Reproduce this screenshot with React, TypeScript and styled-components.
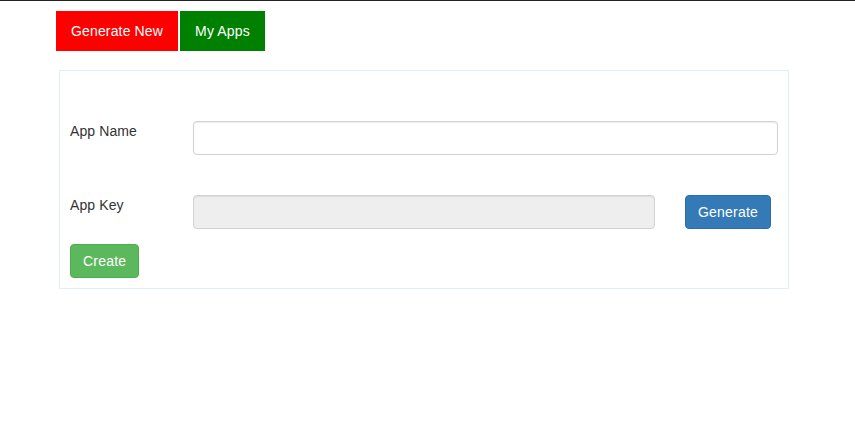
import styled, { createGlobalStyle } from "styled-components";

const GlobalStyle = createGlobalStyle`
  html, body {
    margin: 0;
    padding: 0;
    background: #fff;
  }
  body {
    font-family: "Liberation Sans", Arial, sans-serif;
    font-size: 14px;
    line-height: 20px;
    color: #333;
    border-top: 1px solid #222;
  }
  * {
    box-sizing: border-box;
  }
`;

const Page = styled.div`
  padding: 10px 0 0 56px;
`;

// top nav
const Nav = styled.nav`
  display: flex;
  gap: 2px;
`;

const NavButton = styled.button<{ tone: string }>`
  font: inherit;
  letter-spacing: 0.15px;
  color: #fff;
  background: ${(props) => props.tone};
  border: none;
  border-radius: 0;
  padding: 10px 15px;
  line-height: 20px;
  cursor: pointer;
`;

// form panel
const Panel = styled.div`
  width: 730px;
  height: 219px;
  margin: 19px 0 0 3px;
  border: 1px solid #e1eefa;
  padding: 50px 10px 0 10px;
`;

const Row = styled.div<{ gap?: number }>`
  display: grid;
  grid-template-columns: 123px 1fr;
  align-items: start;
  margin-bottom: ${(props) => props.gap ?? 0}px;
`;

const Label = styled.label`
  letter-spacing: 0.1px;
`;

const Field = styled.div`
  display: flex;
  align-items: center;
`;

const Input = styled.input`
  display: block;
  width: 100%;
  height: 34px;
  padding: 6px 12px;
  font: inherit;
  color: #555;
  background: ${(props) => (props.disabled ? "#eee" : "#fff")};
  border: 1px solid #d2d2d2;
  border-radius: 4px;
  box-shadow: inset 0 1px 1px rgba(0, 0, 0, 0.075);
  outline: none;
`;

const KeyInput = styled(Input)`
  width: 462px;
  flex: none;
`;

const Button = styled.button<{ variant: "primary" | "success" }>`
  font: inherit;
  letter-spacing: 0.2px;
  line-height: 20px;
  padding: 6px 12px;
  border-radius: 4px;
  color: #fff;
  cursor: pointer;
  background: ${(props) => (props.variant === "primary" ? "#337ab7" : "#5cb85c")};
  border: 1px solid
    ${(props) => (props.variant === "primary" ? "#2e6da4" : "#4cae4c")};
`;

const GenerateButton = styled(Button)`
  margin-left: 30px;
`;

const App = () => {
  return (
    <Page>
      <GlobalStyle />
      <Nav>
        <NavButton tone="#ff0000">Generate New</NavButton>
        <NavButton tone="#008000">My Apps</NavButton>
      </Nav>
      <Panel>
        <Row gap={40}>
          <Label>App Name</Label>
          <Input type="text" />
        </Row>
        <Row gap={15}>
          <Label>App Key</Label>
          <Field>
            <KeyInput type="text" disabled />
            <GenerateButton variant="primary">Generate</GenerateButton>
          </Field>
        </Row>
        <Button variant="success">Create</Button>
      </Panel>
    </Page>
  );
};

export default App;
